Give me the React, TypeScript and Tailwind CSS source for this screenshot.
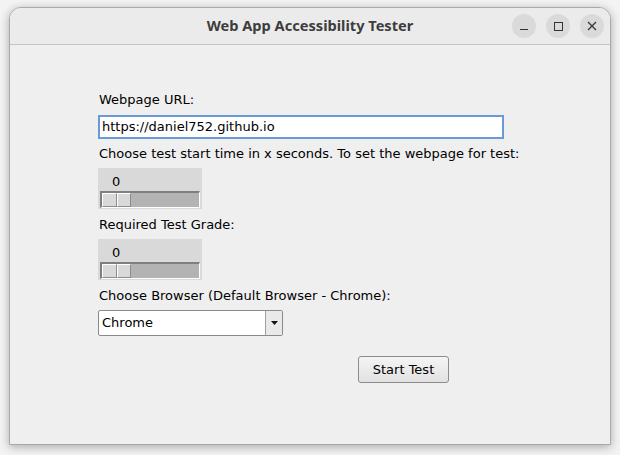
import React from "react";

const font = { fontFamily: '"DejaVu Sans", "Liberation Sans", sans-serif' };

const Scale: React.FC<{ value: number }> = ({ value }) => (
  <div className="w-[104px] h-[41px] bg-[#d9d9d9] flex flex-col px-[2px] pb-[1px]">
    <div className="h-[23px] flex items-end pl-[12px] pb-[2px] text-[13px] leading-[14px] text-black">
      {value}
    </div>
    <div className="h-[17px] bg-[#b3b3b3] border-t-2 border-l-2 border-[#7f7f7f] border-b border-r border-b-white border-r-white flex">
      <div className="w-[15px] h-full bg-[#d9d9d9] border-t border-l border-white border-r border-b border-r-[#8c8c8c] border-b-[#8c8c8c]" />
      <div className="w-[14px] h-full bg-[#d9d9d9] border-t border-l border-white border-r border-b border-r-[#8c8c8c] border-b-[#8c8c8c]" />
    </div>
  </div>
);

export default function App() {
  return (
    <div className="w-[620px] h-[455px] bg-[#f3f3f3] px-[9px] pt-[7px] pb-[10px]" style={font}>
      <div className="w-full h-full flex flex-col rounded-t-[12px] border border-[#a9a9a9] bg-[#efefef] shadow-[0_2px_10px_rgba(0,0,0,0.3)] overflow-hidden">
        <div className="h-[37px] shrink-0 bg-[#ebebeb] border-b border-[#c6c6c6] relative flex items-center justify-center">
          <span className="text-[14.6px] font-bold text-[#3d3d3d]" style={{ fontFamily: '"Noto Sans", "DejaVu Sans", sans-serif' }}>
            Web App Accessibility Tester
          </span>
          <div className="absolute right-[6px] top-[6px] flex gap-[10px]">
            <div className="w-[24px] h-[24px] rounded-full bg-[#dadada] flex items-center justify-center">
              <div className="w-[8px] h-[1.5px] bg-[#333] mt-[7px]" />
            </div>
            <div className="w-[24px] h-[24px] rounded-full bg-[#dadada] flex items-center justify-center">
              <div className="w-[9px] h-[9px] border border-[#333]" />
            </div>
            <div className="w-[24px] h-[24px] rounded-full bg-[#dadada] flex items-center justify-center">
              <svg width="10" height="10" viewBox="0 0 10 10">
                <path d="M1 1 L9 9 M9 1 L1 9" stroke="#333" strokeWidth="1.3" />
              </svg>
            </div>
          </div>
        </div>

        <div className="flex-1 flex flex-col items-start pl-[88px] pt-[47px] text-[13px] text-black">
          <div className="h-[16px] leading-[16px] pl-[1px]">Webpage URL:</div>
          <div className="mt-[7px] w-[406px] h-[24px] bg-white border-2 border-[#6a9ad6] flex items-center pl-[2px] leading-[16px]">
            https://daniel752.github.io
          </div>
          <div className="mt-[7px] h-[16px] leading-[16px] pl-[1px]">
            Choose test start time in x seconds. To set the webpage for test:
          </div>
          <div className="mt-[6px]">
            <Scale value={0} />
          </div>
          <div className="mt-[8px] h-[16px] leading-[16px] pl-[1px]">Required Test Grade:</div>
          <div className="mt-[6px]">
            <Scale value={0} />
          </div>
          <div className="mt-[8px] h-[16px] leading-[16px] pl-[1px]">Choose Browser (Default Browser - Chrome):</div>
          <div className="mt-[6px] w-[185px] h-[26px] bg-white border border-[#8a8a8a] rounded-[2px] flex">
            <div className="flex-1 flex items-center pl-[3px] leading-[16px]">Chrome</div>
            <div className="w-[17px] h-full bg-[#e9e9e9] border-l border-[#a0a0a0] flex items-center justify-center">
              <svg width="7" height="4" viewBox="0 0 7 4">
                <path d="M0 0 L7 0 L3.5 4 Z" fill="#111" />
              </svg>
            </div>
          </div>
          <div className="w-[351px] flex justify-end mt-[20px]">
            <button className="w-[91px] h-[27px] rounded-[3px] border border-[#8c8c8c] bg-gradient-to-b from-[#f4f4f4] to-[#e2e2e2] text-[13px] text-black leading-[16px]">
              Start Test
            </button>
          </div>
        </div>
      </div>
    </div>
  );
}
